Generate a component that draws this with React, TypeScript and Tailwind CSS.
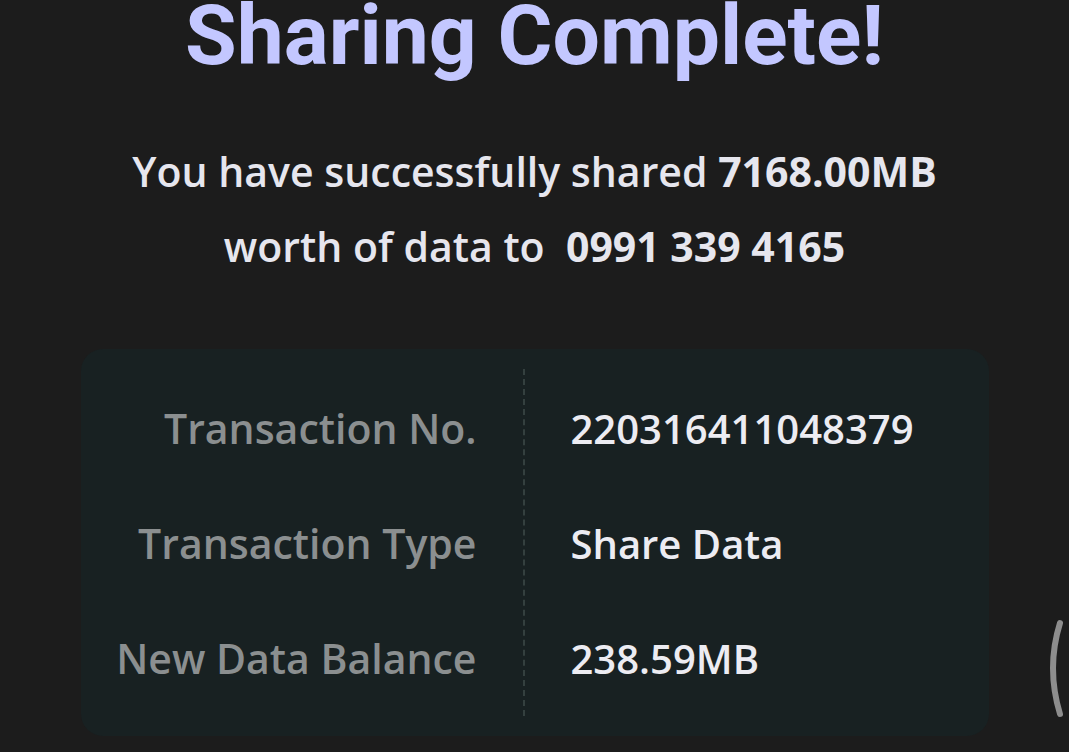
import React from 'react';

const ROWS = [
  { label: 'Transaction No.', value: '220316411048379' },
  { label: 'Transaction Type', value: 'Share Data' },
  { label: 'New Data Balance', value: '238.59MB' },
];

export default function App() {
  return (
    <div className="relative w-[1069px] h-[752px] overflow-hidden bg-[#1c1c1c] flex flex-col items-center">
      {/* Title */}
      <h1 className="text-[84px] leading-[72px] font-bold text-[#c3c7ff] [font-family:Roboto,sans-serif]">
        Sharing Complete!
      </h1>

      {/* Message */}
      <div className="mt-[62px] flex flex-col items-center text-[41px] leading-[75px] font-semibold text-[#e6e6ee] [font-family:'Open_Sans',sans-serif]">
        <p>You have successfully shared <span className="font-bold">7168.00MB</span></p>
        <p>worth of data to&nbsp; <span className="font-bold">0991 339 4165</span></p>
      </div>

      {/* Details card */}
      <div className="mt-[65px] w-[908px] h-[387px] rounded-[22px] bg-[#182122] flex py-[20px] [font-family:'Open_Sans',sans-serif]">
        <div className="w-[442px] flex flex-col items-end pr-[46px] pt-[2px] text-[41px] font-semibold text-[#8b8f90]">
          {ROWS.map(r => (
            <div key={r.label} className="h-[115px] flex items-center">{r.label}</div>
          ))}
        </div>
        <div className="border-l-2 border-dashed border-[#34403f]" />
        <div className="flex-1 flex flex-col pl-[46px] pt-[2px] text-[40px] font-semibold text-[#ececf2]">
          {ROWS.map(r => (
            <div key={r.label} className="h-[115px] flex items-center">{r.value}</div>
          ))}
        </div>
      </div>

      {/* scroll arc */}
      <svg className="absolute left-[1040px] top-[616px]" width="28" height="108" viewBox="0 0 28 108">
        <path d="M20 7 Q6 52 20 98" fill="none" stroke="#8d8d8d" strokeWidth="6" strokeLinecap="round" />
      </svg>
    </div>
  );
}
